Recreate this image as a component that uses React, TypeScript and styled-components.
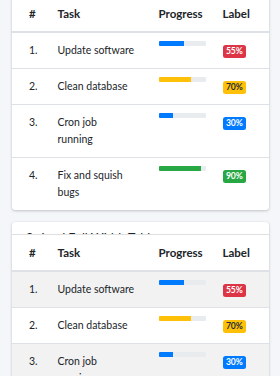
import React from "react";
import styled, { createGlobalStyle } from "styled-components";

const GlobalStyle = createGlobalStyle`
  html, body {
    margin: 0;
    padding: 0;
    background: #f4f6f9;
    font-family: "Lato", "Noto Sans", sans-serif;
    font-size: 10.5px;
    color: #212529;
  }
`;

const Page = styled.div`
  margin-top: -4px;
  padding: 0 11px 12px 12px;
  display: flex;
  flex-direction: column;
  gap: 12px;
`;

const Card = styled.div`
  background: #fff;
  border-radius: 3px;
  box-shadow: 0 0 1px rgba(0, 0, 0, 0.125), 0 1px 3px rgba(0, 0, 0, 0.2);
  overflow: hidden;
`;

const CardHeader = styled.div`
  height: 13px;
  box-sizing: border-box;
  padding: 0 14px;
  border-bottom: 1px solid rgba(0, 0, 0, 0.125);
  overflow: hidden;
`;

const CardTitle = styled.h3`
  margin: 11px 0 0;
  font-size: 12.5px;
  line-height: 12px;
  font-weight: 400;
  color: #212529;
  white-space: nowrap;
`;

const Table = styled.table`
  width: 100%;
  border-collapse: collapse;
  table-layout: fixed;
`;

const Th = styled.th`
  text-align: left;
  font-size: 11.5px;
  font-weight: 700;
  line-height: 17px;
  padding: 9px 8.5px;
  border-bottom: 2px solid #dee2e6;
  &:first-child {
    padding-left: 17px;
  }
`;

const Row = styled.tr<{ $striped?: boolean }>`
  background: ${(p) => (p.$striped ? "rgba(0,0,0,0.05)" : "transparent")};
`;

const Td = styled.td`
  vertical-align: top;
  line-height: 17px;
  padding: 9px 8.5px;
  border-top: 1px solid #dee2e6;
  &:first-child {
    padding-left: 17px;
  }
`;

const TaskText = styled.span`
  white-space: pre-line;
`;

const Track = styled.div`
  height: 5px;
  margin-top: -1px;
  background: #e9ecef;
  border-radius: 1px;
  overflow: hidden;
`;

const Fill = styled.div<{ $color: string }>`
  height: 100%;
  background: ${(p) => p.$color};
`;

const badgeColors: Record<string, [string, string]> = {
  danger: ["#dc3545", "#fff"],
  warning: ["#ffc107", "#1f2d3d"],
  primary: ["#007bff", "#fff"],
  success: ["#28a745", "#fff"],
};

const Badge = styled.span<{ $kind: string }>`
  display: inline-block;
  font-size: 8.6px;
  font-weight: 700;
  line-height: 1;
  padding: 2.2px 3.4px;
  border-radius: 2.5px;
  background: ${(p) => badgeColors[p.$kind][0]};
  color: ${(p) => badgeColors[p.$kind][1]};
`;

type Item = { n: string; task: string; pct: number; color: string; badge: string };

const items: Item[] = [
  { n: "1.", task: "Update software", pct: 55, color: "#007bff", badge: "danger" },
  { n: "2.", task: "Clean database", pct: 70, color: "#ffc107", badge: "warning" },
  { n: "3.", task: "Cron job\nrunning", pct: 30, color: "#007bff", badge: "primary" },
  { n: "4.", task: "Fix and squish\nbugs", pct: 90, color: "#28a745", badge: "success" },
];

const TaskTable = ({ striped }: { striped?: boolean }) => (
  <Table>
    <colgroup>
      <col style={{ width: 37 }} />
      <col style={{ width: 101 }} />
      <col style={{ width: 64 }} />
      <col />
    </colgroup>
    <thead>
      <tr>
        <Th>#</Th>
        <Th>Task</Th>
        <Th>Progress</Th>
        <Th>Label</Th>
      </tr>
    </thead>
    <tbody>
      {items.map((it, i) => (
        <Row key={it.n} $striped={striped && i % 2 === 0}>
          <Td>{it.n}</Td>
          <Td>
            <TaskText>{it.task}</TaskText>
          </Td>
          <Td>
            <Track>
              <Fill $color={it.color} style={{ width: `${it.pct}%` }} />
            </Track>
          </Td>
          <Td>
            <Badge $kind={it.badge}>{it.pct}%</Badge>
          </Td>
        </Row>
      ))}
    </tbody>
  </Table>
);

export default function App() {
  return (
    <>
      <GlobalStyle />
      <Page>
        <Card>
          <TaskTable />
        </Card>
        <Card>
          <CardHeader>
            <CardTitle>Striped Full Width Table</CardTitle>
          </CardHeader>
          <TaskTable striped />
        </Card>
      </Page>
    </>
  );
}
